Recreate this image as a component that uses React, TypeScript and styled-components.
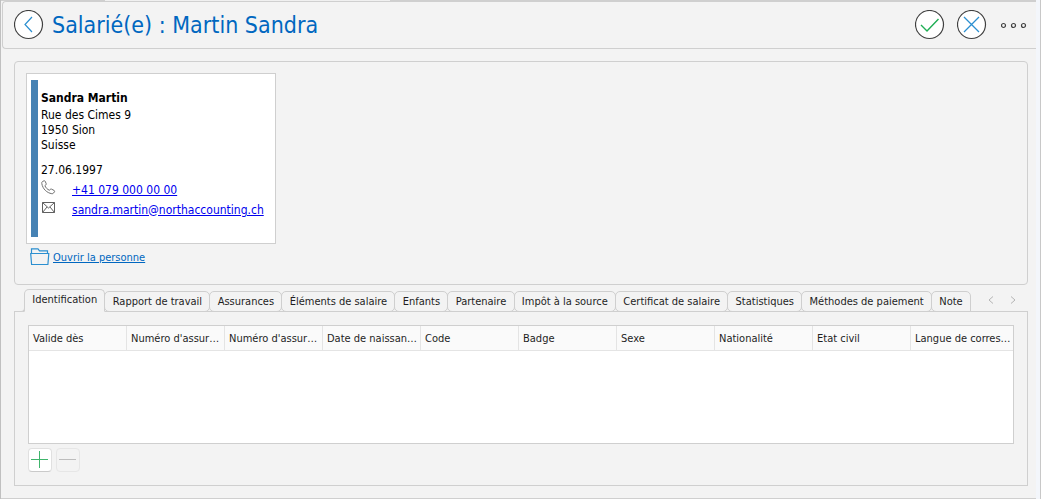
import React, { useState } from "react";
import styled, { createGlobalStyle, css } from "styled-components";

const line = "#cfcfcf";
const sans = `"DejaVu Sans Condensed", "DejaVu Sans", sans-serif`;

const GlobalStyle = createGlobalStyle`
  *, *::before, *::after { box-sizing: border-box; }
  html, body, #root { height: 100%; margin: 0; }
  body { background: #f3f3f3; font-family: ${sans}; font-size: 11px; color: #1e1e1e; }
  button { font: inherit; color: inherit; padding: 0; cursor: pointer; }
`;

const Window = styled.div`
  min-height: 100%;
  display: flex;
  flex-direction: column;
  padding: 0 4px 0 1px;
  background: #f3f6fb;
  border-left: 1px solid #c0c0c0;
  border-right: 1px solid #c8c8c8;
`;

const TopEdge = styled.div`
  display: flex;
  height: 1px;
  margin-left: -1px;
  background: ${line};
`;

const TopTab = styled.span`
  width: 285px;
  margin-left: 104px;
  background: #f0f0f0;
`;

const Page = styled.main`
  flex: 1;
  display: flex;
  flex-direction: column;
  margin-left: -1px;
  background: #f3f3f3;
  border-bottom: 1px solid ${line};
`;

const Header = styled.header`
  display: flex;
  align-items: center;
  height: 48px;
  margin-left: 1px;
  padding: 0 7px 0 11px;
  border: 1px solid ${line};
  border-right: 0;
  border-radius: 4px 0 0 4px;
`;

const Title = styled.h1`
  flex: 1;
  margin: 0 0 0 8px;
  font-size: 23px;
  line-height: 34px;
  font-weight: 400;
  color: #0067c0;
`;

const Actions = styled.div`
  display: flex;
  gap: 12px;
`;

const IconButton = styled.button`
  display: flex;
  align-items: center;
  justify-content: center;
  width: 30px;
  height: 30px;
  border: 0;
  background: none;
`;

const Content = styled.div`
  flex: 1;
  display: flex;
  flex-direction: column;
  padding: 12px 8px 12px 13px;
`;

const PersonPanel = styled.section`
  height: 224px;
  padding: 11px;
  border: 1px solid ${line};
  border-radius: 4px;
`;

const Card = styled.address`
  display: flex;
  gap: 3px;
  width: 250px;
  height: 171px;
  padding: 6px 4px;
  background: #fff;
  border: 1px solid ${line};
  font-size: 12px;
  line-height: 15px;
  font-style: normal;
  color: #000;
`;

const CardBar = styled.div`
  width: 7px;
  background: #4682b4;
`;

const CardBody = styled.div`
  padding-top: 11px;
  white-space: nowrap;
`;

const Name = styled.strong`
  display: block;
  margin-bottom: 2px;
`;

const AddressLine = styled.div``;

const Birth = styled.div`
  margin: 10px 0 2px;
`;

const Contact = styled.div`
  display: flex;
  align-items: center;
  gap: 16px;
  height: 20px;

  a { color: #0000ee; }
  svg { margin-bottom: 6px; }
`;

const OpenLink = styled.a`
  display: inline-flex;
  align-items: center;
  gap: 3px;
  height: 26px;
  margin-left: 4px;
  color: #0067c0;
`;

const TabBar = styled.nav`
  display: flex;
  justify-content: space-between;
  height: 23px;
  margin: 4px 0 -1px;
  padding: 0 11px 0 10px;
`;

const TabList = styled.div`
  display: flex;
  align-items: flex-end;
  width: 947px;
`;

const Tab = styled.button<{ $active: boolean; $last: boolean }>`
  position: relative;
  flex: 1 0 auto;
  height: 21px;
  margin-left: -1px;
  padding: 0 7px 1px;
  white-space: nowrap;
  background: none;
  border: 1px solid ${line};
  border-radius: 5px;

  ${({ $active }) =>
    $active &&
    css`
      height: 23px;
      margin-left: 0;
      padding-bottom: 2px;
      background: #f3f3f3;
      border-bottom-color: #f3f3f3;
      border-radius: 5px 5px 0 0;
      &::before {
        content: "";
        position: absolute;
        left: -5px;
        bottom: -1px;
        width: 5px;
        height: 5px;
        background: #f3f3f3;
        border: solid ${line};
        border-width: 0 1px 1px 0;
        border-radius: 0 0 4px 0;
      }
    `}

  ${({ $last }) =>
    $last &&
    css`
      border-bottom-right-radius: 0;
    `}
`;

const Scroller = styled.div`
  display: flex;
  gap: 14px;
  padding-top: 7px;
`;

const ScrollButton = styled.button`
  display: flex;
  width: 8px;
  height: 8px;
  border: 0;
  background: none;
`;

const TabPanel = styled.section`
  flex: 1;
  display: flex;
  flex-direction: column;
  padding: 13px;
  border: 1px solid ${line};
`;

const Grid = styled.div`
  flex: 1;
  background: #fff;
  border: 1px solid ${line};
`;

const Table = styled.table`
  width: 100%;
  table-layout: fixed;
  border-collapse: separate;
  border-spacing: 0;
`;

const HeadCell = styled.th`
  width: 98px;
  height: 25px;
  padding: 0 0 0 4px;
  overflow: hidden;
  white-space: nowrap;
  text-align: left;
  font-weight: 400;
  background: #fafafa;
  border: solid #e4e4e4;
  border-width: 0 1px 1px 0;

  &:last-child {
    width: auto;
    border-right: 0;
  }
`;

const RowActions = styled.div`
  display: flex;
  gap: 4px;
  margin-top: 4px;
`;

const SquareButton = styled.button`
  display: flex;
  align-items: center;
  justify-content: center;
  width: 24px;
  height: 24px;
  background: #fff;
  border: 1px solid #e0e0e0;
  border-bottom-color: #cacaca;
  border-radius: 4px;

  &:disabled {
    background: #f3f3f3;
    border-color: #e6e6e6;
    cursor: default;
  }
`;

const Disc = ({ children }: { children: React.ReactNode }) => (
  <svg width="30" height="30" viewBox="0.5 0.5 30 30" fill="none" aria-hidden="true">
    <circle cx="15" cy="15" r="14" fill="#fff" stroke="#404040" strokeWidth="1.2" />
    {children}
  </svg>
);

const tabs = [
  "Identification",
  "Rapport de travail",
  "Assurances",
  "Éléments de salaire",
  "Enfants",
  "Partenaire",
  "Impôt à la source",
  "Certificat de salaire",
  "Statistiques",
  "Méthodes de paiement",
  "Note",
];

const columns = [
  { id: "valid", label: "Valide dès" },
  { id: "number1", label: "Numéro d'assur…" },
  { id: "number2", label: "Numéro d'assur…" },
  { id: "birth", label: "Date de naissan…" },
  { id: "code", label: "Code" },
  { id: "badge", label: "Badge" },
  { id: "sex", label: "Sexe" },
  { id: "nationality", label: "Nationalité" },
  { id: "status", label: "Etat civil" },
  { id: "language", label: "Langue de corres…" },
];

export default function App() {
  const [active, setActive] = useState(0);

  return (
    <>
      <GlobalStyle />
      <Window>
        <TopEdge>
          <TopTab />
        </TopEdge>
        <Page>
          <Header>
            <IconButton aria-label="Retour">
              <Disc>
                <path d="M18.500 7.500 11.500 15l7 7.500" stroke="#2b8fd0" strokeWidth="1.200" />
              </Disc>
            </IconButton>
            <Title>Salarié(e) : Martin Sandra</Title>
            <Actions>
              <IconButton aria-label="Valider">
                <Disc>
                  <path d="M6.500 15.500 12.500 21.500 24 9.500" stroke="#1fae54" strokeWidth="1.400" />
                </Disc>
              </IconButton>
              <IconButton aria-label="Annuler">
                <Disc>
                  <path d="M7.500 7.500l15 15M22.500 7.500l-15 15" stroke="#2b8fd0" strokeWidth="1.300" />
                </Disc>
              </IconButton>
              <IconButton aria-label="Plus d'options">
                <svg width="26" height="8" viewBox="0 0 26 8" fill="none" stroke="#404040" strokeWidth="1.200">
                  <circle cx="2.500" cy="4.500" r="2" />
                  <circle cx="12.500" cy="4.500" r="2" />
                  <circle cx="22.500" cy="4.500" r="2" />
                </svg>
              </IconButton>
            </Actions>
          </Header>
          <Content>
            <PersonPanel>
              <Card>
                <CardBar />
                <CardBody>
                  <Name>Sandra Martin</Name>
                  <AddressLine>Rue des Cimes 9</AddressLine>
                  <AddressLine>1950 Sion</AddressLine>
                  <AddressLine>Suisse</AddressLine>
                  <Birth>27.06.1997</Birth>
                  <Contact>
                    <svg width="15" height="15" viewBox="0 0 15 15" fill="none" stroke="#707070" aria-hidden="true">
                      <path d="M1.500 1.500 3 .8c.5-.2 1 0 1.200.5l1 2.400c.2.500 0 .9-.4 1.200l-.9.700c.8 2.100 2.400 3.800 4.600 4.700l.8-1c.3-.4.800-.5 1.200-.2l2.700 1.400c.5.300.6.800.3 1.200l-.9 1.300c-.4.600-1.100.8-1.800.7C5.900 12.900 1.700 9 .8 3.500c-.1-.8 0-1.600.7-2Z" />
                    </svg>
                    <a href="tel:+41790000000">+41 079 000 00 00</a>
                  </Contact>
                  <Contact>
                    <svg width="15" height="13" viewBox="0 0 15 13" fill="none" stroke="#606060" aria-hidden="true">
                      <path d="M1.500 1.500h12v10h-12zM1.500 1.500l6 5.500 6-5.500M1.500 11.500l4.500-5.500M13.500 11.500 9 6" />
                    </svg>
                    <a href="mailto:sandra.martin@northaccounting.ch">sandra.martin@northaccounting.ch</a>
                  </Contact>
                </CardBody>
              </Card>
              <OpenLink href="#personne">
                <svg width="20" height="18" viewBox="0 0 20 18" fill="none" stroke="#2b8fd0" strokeWidth="1.200" aria-hidden="true">
                  <path d="M1.500 6V.8h6.500l1.500 2h8V6M.7 5.500h18.100l-.9 11H1.600z" />
                </svg>
                Ouvrir la personne
              </OpenLink>
            </PersonPanel>
            <TabBar>
              <TabList role="tablist">
                {tabs.map((label, i) => (
                  <Tab
                    key={label}
                    role="tab"
                    aria-selected={i === active}
                    $active={i === active}
                    $last={i === tabs.length - 1}
                    onClick={() => setActive(i)}
                  >
                    {label}
                  </Tab>
                ))}
              </TabList>
              <Scroller>
                <ScrollButton aria-label="Onglets précédents">
                  <svg width="8" height="8" viewBox="0 0 8 8" fill="none" stroke="#b4b4b4">
                    <path d="M6 .5 2 4l4 3.500" />
                  </svg>
                </ScrollButton>
                <ScrollButton aria-label="Onglets suivants">
                  <svg width="8" height="8" viewBox="0 0 8 8" fill="none" stroke="#b4b4b4">
                    <path d="M2 .5 6 4 2 7.500" />
                  </svg>
                </ScrollButton>
              </Scroller>
            </TabBar>
            <TabPanel role="tabpanel">
              <Grid>
                <Table>
                  <thead>
                    <tr>
                      {columns.map(({ id, label }) => (
                        <HeadCell key={id} scope="col">
                          {label}
                        </HeadCell>
                      ))}
                    </tr>
                  </thead>
                </Table>
              </Grid>
              <RowActions>
                <SquareButton aria-label="Ajouter">
                  <svg width="18" height="18" viewBox="0 0 18 18" stroke="#3fb56c">
                    <path d="M8.500 0v17M0 8.500h17" />
                  </svg>
                </SquareButton>
                <SquareButton aria-label="Supprimer" disabled>
                  <svg width="18" height="18" viewBox="0 0 18 18" stroke="#bdbdbd">
                    <path d="M0 8.500h17" />
                  </svg>
                </SquareButton>
              </RowActions>
            </TabPanel>
          </Content>
        </Page>
      </Window>
    </>
  );
}
